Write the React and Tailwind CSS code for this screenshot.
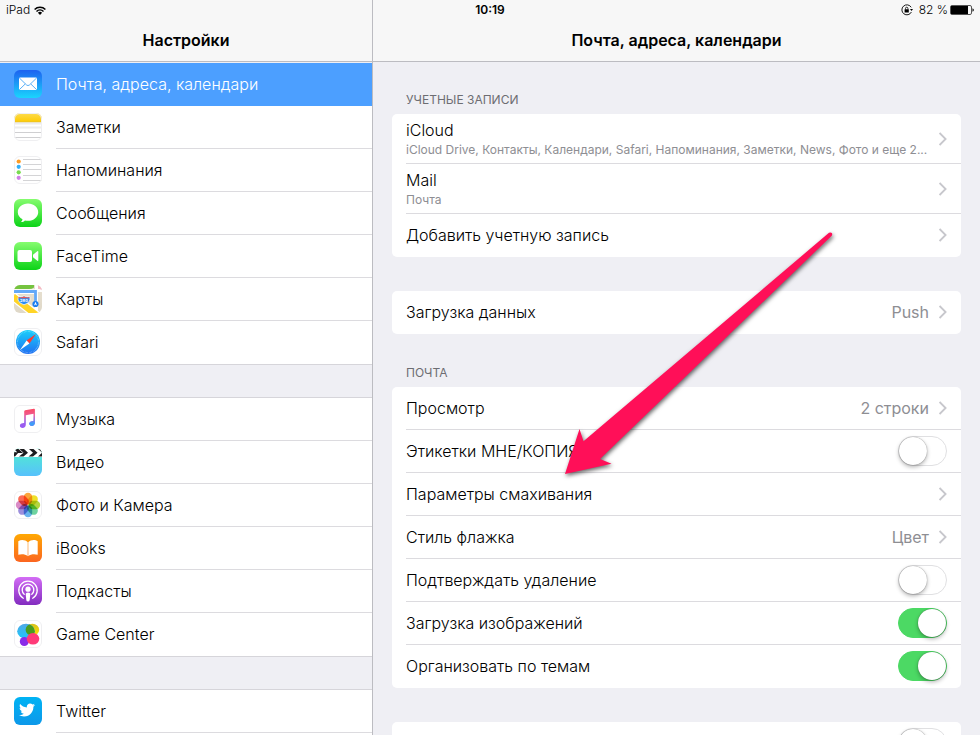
import { FaTwitter } from 'react-icons/fa'

const Tile = ({ id, from, to, outlined, children }) => (
  <svg viewBox="0 0 28 28" className="size-7 shrink-0" aria-hidden="true">
    <defs>
      <linearGradient id={`${id}-bg`} x1="0" y1="0" x2="0" y2="1">
        <stop offset="0" stopColor={from} />
        <stop offset="1" stopColor={to} />
      </linearGradient>
      <clipPath id={`${id}-clip`}>
        <rect width="28" height="28" rx="6" />
      </clipPath>
    </defs>
    <g clipPath={`url(#${id}-clip)`}>
      <rect width="28" height="28" fill={`url(#${id}-bg)`} />
      {children}
    </g>
    {outlined && (
      <rect x="0.5" y="0.5" width="27" height="27" rx="5.5" fill="none" stroke="#efeff1" />
    )}
  </svg>
)

const MailIcon = () => (
  <Tile id="mail" from="#1d62f0" to="#1ad5fd">
    <rect x="5" y="7.5" width="18" height="12.5" rx="1.2" fill="#fff" />
    <path
      d="M5.4 8l7.2 7q1.4 1.2 2.8 0l7.2-7M5.4 19.6l5.8-5.6M22.6 19.6l-5.8-5.6"
      fill="none"
      stroke="#2f9bf5"
      strokeWidth="0.8"
    />
  </Tile>
)

const NotesIcon = () => (
  <Tile id="notes" from="#ffffff" to="#ffffff" outlined>
    <defs>
      <linearGradient id="notes-top" x1="0" y1="0" x2="0" y2="1">
        <stop offset="0" stopColor="#fddc50" />
        <stop offset="1" stopColor="#fecb02" />
      </linearGradient>
    </defs>
    <path d="M0 10.5h28M0 14.5h28" stroke="#ececec" strokeWidth="2" />
    <path d="M0 19.5h28M0 24.5h28" stroke="#cfcfd1" />
    <rect width="28" height="9" fill="url(#notes-top)" />
    <path d="M0 9h28" stroke="#d9b945" strokeWidth="0.6" />
  </Tile>
)

const RemindersIcon = () => (
  <Tile id="reminders" from="#ffffff" to="#ffffff" outlined>
    <path d="M9 3.5h19M9 8.5h19M9 13.5h19M9 19.5h19M9 24.5h19" stroke="#d4d4d6" />
    <circle cx="4.7" cy="5.5" r="2.1" fill="#ff9b21" />
    <circle cx="4.7" cy="10.8" r="2.1" fill="#33aff7" />
    <circle cx="4.7" cy="16.3" r="2.1" fill="#79dc50" />
    <circle cx="4.7" cy="21.8" r="2.1" fill="#d07ee8" />
  </Tile>
)

const MessagesIcon = () => (
  <Tile id="messages" from="#86fc6f" to="#0cd318">
    <path
      d="M14 4.6c5.7 0 10.2 3.8 10.2 8.6s-4.5 8.6-10.2 8.6c-1.1 0-2.1-.1-3.1-.4-.9.9-2.2 1.6-3.9 1.7.9-.8 1.4-1.7 1.5-2.8-2.8-1.5-4.7-4.1-4.7-7.1 0-4.8 4.5-8.6 10.2-8.6z"
      fill="#fff"
    />
  </Tile>
)

const FaceTimeIcon = () => (
  <Tile id="facetime" from="#86fc6f" to="#0cd318">
    <rect x="3.5" y="8" width="14.5" height="12" rx="2" fill="#fff" />
    <path d="M19 12.8l4.3-3.5q1-.6 1 .5v8.4q0 1.1-1 .5L19 15.2z" fill="#fff" />
  </Tile>
)

const MapsIcon = () => (
  <Tile id="maps" from="#e8e1d1" to="#dfd8c8">
    <path d="M0 0h20v2.5q-2 1.5-5 1.5H0z" fill="#75c33f" />
    <path d="M0 4.2h21V0h3v4h4v3H24v21h-3.5V9H0z" fill="#fff" />
    <path d="M24 0h4v5l-4-1.5z" fill="#f6b9c4" />
    <path d="M-1 11.5L26 33" stroke="#fff" strokeWidth="9" />
    <path d="M-1 11.5L26 33" stroke="#ffd426" strokeWidth="6.5" />
    <path d="M0 6.5h21.5v12" fill="none" stroke="#63a9f8" strokeWidth="2.8" />
    <path
      d="M4.5 11.5q2.5 1 5.5-.5 3 1.500 5.500.5.5 1.500.5 3.500-1.500 3.800-6 4.800-4.500-1-6-4.800 0-2 .5-3.500z"
      fill="#2a8cf4"
      stroke="#fff"
      strokeWidth="0.7"
    />
    <path d="M4.7 12q2.3 1 5.3-.4 3 1.4 5.3.4l.3 1.3H4.4z" fill="#f0564d" />
    <text x="10" y="17" textAnchor="middle" fontSize="4" fontWeight="700" fill="#fff">
      280
    </text>
    <circle cx="21.5" cy="19" r="3.1" fill="#1a7df0" />
    <path d="M21.5 16.8l1.5 3.6-1.5-.8-1.5.8z" fill="#fff" />
  </Tile>
)

const SafariIcon = () => (
  <Tile id="safari" from="#ffffff" to="#ffffff" outlined>
    <defs>
      <linearGradient id="safari-dial" x1="0" y1="0" x2="0" y2="1">
        <stop offset="0" stopColor="#1bd0fb" />
        <stop offset="1" stopColor="#1e70f2" />
      </linearGradient>
    </defs>
    <circle cx="14" cy="14" r="12" fill="url(#safari-dial)" />
    <circle
      cx="14"
      cy="14"
      r="10.6"
      fill="none"
      stroke="#fff"
      strokeWidth="1.2"
      strokeOpacity="0.55"
      strokeDasharray="0.4 0.98"
    />
    <path d="M22 6l-6.6 9.4-2.800-2.800z" fill="#ff3b30" />
    <path d="M6 22l6.600-9.400 2.800 2.800z" fill="#fff" />
  </Tile>
)

const MusicIcon = () => (
  <Tile id="music" from="#ffffff" to="#ffffff" outlined>
    <defs>
      <linearGradient id="music-note" x1="0" y1="0" x2="0" y2="1">
        <stop offset="0" stopColor="#fc4a63" />
        <stop offset="0.3" stopColor="#f0588d" />
        <stop offset="0.65" stopColor="#9b5de8" />
        <stop offset="1" stopColor="#9a5cf5" />
      </linearGradient>
      <linearGradient id="music-tail" x1="0" y1="0" x2="0" y2="1">
        <stop offset="0.35" stopColor="#b06be0" stopOpacity="0" />
        <stop offset="0.75" stopColor="#3f9df8" />
      </linearGradient>
      <clipPath id="music-right">
        <rect x="14.500" y="7" width="10" height="16" />
      </clipPath>
    </defs>
    {['url(#music-note)', 'url(#music-tail)'].map((fill, i) => (
      <path
        key={fill}
        d="M10.2 6.4q0-.9.9-1.100l8.700-1.600q1.100-.2 1.100.9v13.100c0 2-1.300 3.200-3.100 3.200-1.500 0-2.500-.9-2.500-2.100 0-1.300.9-2.200 2.500-2.500l1.200-.2q.5-.1.5-.6V8.800l-7.700 1.500v9.200c0 2-1.300 3.500-3.300 3.500-1.600 0-2.600-.9-2.600-2.200 0-1.400 1-2.300 2.600-2.500l1.200-.2q.5-.1.5-.6z"
        fill={fill}
        clipPath={i === 1 ? 'url(#music-right)' : undefined}
      />
    ))}
  </Tile>
)

const VideoIcon = () => (
  <Tile id="video" from="#4ff0cb" to="#57c1fc">
    <rect width="28" height="9" fill="#fff" />
    <path
      d="M0 1h4.5L9 5H4zM5.5 1H10l4 3.7L9.5 8.500H5l4.500-3.800zM15 1h4.500l4 3.700-4.500 3.800h-4.500L19 4.700zM24 1h4v3.500zM0 4l4.500.5L1 8.500H0zM28 4.800v3.700h-4z"
      fill="#1c1c1e"
    />
  </Tile>
)

const petals = ['#fba43c', '#efe02a', '#b3d63f', '#6fd3a0', '#69b4ee', '#9c8fdc', '#d98bc6', '#fb6a55']

const PhotosIcon = () => (
  <Tile id="photos" from="#ffffff" to="#ffffff" outlined>
    {petals.map((color, i) => (
      <rect
        key={color}
        x="9.8"
        y="1.8"
        width="8.4"
        height="11.7"
        rx="4.2"
        fill={color}
        transform={`rotate(${i * 45} 14 14)`}
        className="mix-blend-multiply"
      />
    ))}
  </Tile>
)

const BooksIcon = () => (
  <Tile id="books" from="#ffa903" to="#fb6520">
    <path
      d="M13.7 8.3C11.5 5.8 7 5.3 4.3 7.3v13.5c2.8-1 7.2-.8 9.4 1.4zM14.300 8.300c2.200-2.500 6.700-3 9.400-1v13.500c-2.800-1-7.200-.8-9.400 1.400z"
      fill="#fff"
    />
  </Tile>
)

const PodcastsIcon = () => (
  <Tile id="podcasts" from="#d36df5" to="#822cbf">
    <g fill="none" stroke="#fff" strokeWidth="1.3" strokeLinecap="round">
      <path d="M9.3 21.2a9.2 9.2 0 1 1 9.4 0" />
      <path d="M10.2 17.3a5.8 5.8 0 1 1 7.6 0" />
    </g>
    <circle cx="14" cy="12.2" r="2.6" fill="#fff" />
    <path d="M11.7 17q0-1.5 2.3-1.5t2.3 1.5l-.6 6q-.2 1.6-1.7 1.6T12.3 23z" fill="#fff" />
  </Tile>
)

const GameCenterIcon = () => (
  <Tile id="gamecenter" from="#ffffff" to="#ffffff" outlined>
    <defs>
      <linearGradient id="gc-blue" x1="0" y1="0" x2="0" y2="1">
        <stop offset="0" stopColor="#4fa8e6" />
        <stop offset="1" stopColor="#1cc8fb" />
      </linearGradient>
      <linearGradient id="gc-yellow" x1="0" y1="0" x2="0" y2="1">
        <stop offset="0" stopColor="#d8c01b" />
        <stop offset="1" stopColor="#fbe204" />
      </linearGradient>
      <clipPath id="gc-blue-clip">
        <ellipse cx="12" cy="11.3" rx="8.8" ry="7.5" />
      </clipPath>
    </defs>
    <ellipse cx="18.4" cy="9.7" rx="6.8" ry="6" fill="url(#gc-yellow)" />
    <ellipse cx="12" cy="11.3" rx="8.8" ry="7.5" fill="url(#gc-blue)" />
    <ellipse cx="18.4" cy="9.7" rx="6.8" ry="6" fill="#4a9c1e" clipPath="url(#gc-blue-clip)" />
    <circle cx="10.3" cy="21.5" r="4.5" fill="#8a2be8" />
    <ellipse cx="19" cy="18.8" rx="6.300" ry="5.800" fill="#ff3a78" />
  </Tile>
)

const TwitterIcon = () => (
  <Tile id="twitter" from="#00b3f4" to="#0d98e9">
    <FaTwitter x="5" y="5" width="18" height="18" color="#fff" />
  </Tile>
)

const sidebarGroups = [
  [
    { label: 'Почта, адреса, календари', Icon: MailIcon, selected: true },
    { label: 'Заметки', Icon: NotesIcon },
    { label: 'Напоминания', Icon: RemindersIcon },
    { label: 'Сообщения', Icon: MessagesIcon },
    { label: 'FaceTime', Icon: FaceTimeIcon },
    { label: 'Карты', Icon: MapsIcon },
    { label: 'Safari', Icon: SafariIcon },
  ],
  [
    { label: 'Музыка', Icon: MusicIcon },
    { label: 'Видео', Icon: VideoIcon },
    { label: 'Фото и Камера', Icon: PhotosIcon },
    { label: 'iBooks', Icon: BooksIcon },
    { label: 'Подкасты', Icon: PodcastsIcon },
    { label: 'Game Center', Icon: GameCenterIcon },
  ],
  [
    { label: 'Twitter', Icon: TwitterIcon },
    { label: '' },
  ],
]

const Chevron = () => (
  <svg viewBox="0 0 8 14" className="h-3.5 w-2 shrink-0" aria-hidden="true">
    <path d="M0.600 1l6 6-6 6" fill="none" stroke="#c7c7cc" strokeWidth="1.8" />
  </svg>
)

const SidebarItem = ({ label, Icon, selected }) => (
  <li className="group">
    <a
      href="#"
      aria-current={selected ? 'page' : undefined}
      className={`flex h-[43px] gap-3.5 pl-3.5 ${
        selected ? 'bg-[#4c9fff] text-white' : 'text-black'
      }`}
    >
      {Icon && (
        <span className="pt-[7px]">
          <Icon />
        </span>
      )}
      <span
        className={`flex flex-1 items-center border-b group-last:border-transparent ${
          selected ? 'border-transparent' : 'border-[#dcdbdf]'
        }`}
      >
        {label}
      </span>
    </a>
  </li>
)

const Sidebar = () => (
  <aside className="flex w-[373px] shrink-0 flex-col border-r border-[#bcbcc1]">
    <PaneHeader title="Настройки" />
    <nav className="flex-1 overflow-hidden bg-[#efeff4] pt-px">
      {sidebarGroups.map((items, i) => (
        <div key={i}>
          {i > 0 && <div className="h-[34px] border-y border-[#d6d5da]" />}
          <ul className="bg-white">
            {items.map((item) => (
              <SidebarItem key={item.label} {...item} />
            ))}
          </ul>
        </div>
      ))}
    </nav>
  </aside>
)

const PaneHeader = ({ title }) => (
  <header className="flex h-[62px] shrink-0 items-center justify-center border-b border-[#bcbcc1] bg-[#f7f7f7] pt-[18px]">
    <h1 className="font-semibold">{title}</h1>
  </header>
)

const Section = ({ title, children }) => (
  <section className={title ? 'mt-[31px] first:mt-[30px]' : 'mt-[34px]'}>
    {title && (
      <h2 className="px-3.5 pb-1.5 text-xs font-normal text-[#6d6d72] uppercase">{title}</h2>
    )}
    <div className="rounded-[5px] bg-white pl-3.5">{children}</div>
  </section>
)

const AccountRow = ({ title, detail }) => (
  <a
    href="#"
    className="flex h-[50px] items-center border-b border-[#dcdbdf] pr-3.5 last:border-transparent"
  >
    <span className="flex min-w-0 flex-1 flex-col gap-1 pt-[3px]">
      <span className="leading-4">{title}</span>
      <span className="text-xs font-normal whitespace-nowrap text-[#8e8e93]">{detail}</span>
    </span>
    <Chevron />
  </a>
)

const LinkRow = ({ title, value }) => (
  <a
    href="#"
    className="flex h-[43px] items-center gap-2.5 border-b border-[#dcdbdf] pr-3.5 last:border-transparent"
  >
    <span className="flex-1">{title}</span>
    {value && <span className="font-normal text-[#8e8e93]">{value}</span>}
    <Chevron />
  </a>
)

const SwitchRow = ({ title, on }) => (
  <label className="flex h-[43px] items-center border-b border-[#dcdbdf] pr-3.5 last:border-transparent">
    <span className="flex-1">{title}</span>
    <input
      type="checkbox"
      role="switch"
      defaultChecked={on}
      className="flex h-[30px] w-[49px] shrink-0 appearance-none items-center rounded-full border border-[#e0e0e2] bg-white before:size-7 before:rounded-full before:bg-white before:shadow-[0_2px_4px_rgba(0,0,0,0.3),0_0_1px_rgba(0,0,0,0.5)] before:content-[''] checked:justify-end checked:border-[#4cd964] checked:bg-[#4cd964]"
    />
  </label>
)

const StatusBar = () => (
  <div className="absolute inset-x-0 top-0 grid h-5 grid-cols-3 items-center px-1.5 text-xs">
    <div className="flex items-center gap-1">
      <span>iPad</span>
      <svg viewBox="0 0 12 9" className="h-[9px] w-3" aria-label="Wi-Fi">
        <g fill="none" stroke="#000" strokeWidth="1.5">
          <path d="M.6 3.500a7.600 7.600 0 0 1 10.800 0" />
          <path d="M2.500 5.500a5 5 0 0 1 7 0" />
        </g>
        <path d="M3.9 6.8a3 3 0 0 1 4.200 0L6 9z" />
      </svg>
    </div>
    <span className="text-center font-semibold">10:19</span>
    <div className="flex items-center justify-end">
      <svg viewBox="0 0 12 12" className="mr-1.5 size-3" aria-label="Блокировка ориентации">
        <path d="M10.2 3.3A5 5 0 1 0 10.4 8" fill="none" stroke="#000" strokeWidth="0.9" />
        <path d="M9 5h3l-1.5 2z" />
        <rect x="3.6" y="5.3" width="4.2" height="3.2" rx="0.3" />
        <path d="M4.5 5.5V4.400a1.200 1.200 0 0 1 2.400 0v1.100" fill="none" stroke="#000" strokeWidth="0.8" />
      </svg>
      <span className="mr-0.5">82 %</span>
      <svg viewBox="0 0 24 10" className="h-2.5 w-6" aria-label="Аккумулятор">
        <rect x="0.5" y="0.5" width="21" height="9" rx="1.5" fill="none" stroke="#555" />
        <rect x="1" y="1" width="17" height="8" />
        <path d="M22.5 3.2q1.300.5 1.300 1.800t-1.300 1.800z" />
      </svg>
    </div>
  </div>
)

const PointerArrow = () => (
  <svg
    viewBox="0 0 272 248"
    className="pointer-events-none absolute top-[230px] left-[563px] h-[248px] w-[272px] drop-shadow-[1px_2px_2px_rgba(0,0,0,0.6)]"
    aria-hidden="true"
  >
    <path
      d="M2 244L16.5 199 20.5 211.3 266 2.8Q268 1.8 269 3.2 269.6 4.5 268.5 6L37 229 48.5 233.7Z"
      fill="#ff0f58"
    />
  </svg>
)

export default function App() {
  return (
    <div className="relative flex h-screen overflow-hidden bg-[#efeff4] font-['Inter','Noto_Sans',sans-serif] text-base font-[350] text-black">
      <Sidebar />
      <div className="flex min-w-0 flex-1 flex-col">
        <PaneHeader title="Почта, адреса, календари" />
        <main className="flex-1 overflow-hidden px-[19px]">
          <Section title="Учетные записи">
            <AccountRow
              title="iCloud"
              detail="iCloud Drive, Контакты, Календари, Safari, Напоминания, Заметки, News, Фото и еще 2..."
            />
            <AccountRow title="Mail" detail="Почта" />
            <LinkRow title="Добавить учетную запись" />
          </Section>
          <Section>
            <LinkRow title="Загрузка данных" value="Push" />
          </Section>
          <Section title="Почта">
            <LinkRow title="Просмотр" value="2 строки" />
            <SwitchRow title="Этикетки МНЕ/КОПИЯ" />
            <LinkRow title="Параметры смахивания" />
            <LinkRow title="Стиль флажка" value="Цвет" />
            <SwitchRow title="Подтверждать удаление" />
            <SwitchRow title="Загрузка изображений" on />
            <SwitchRow title="Организовать по темам" on />
          </Section>
          <Section>
            <SwitchRow title="" />
          </Section>
        </main>
      </div>
      <StatusBar />
      <PointerArrow />
    </div>
  )
}
